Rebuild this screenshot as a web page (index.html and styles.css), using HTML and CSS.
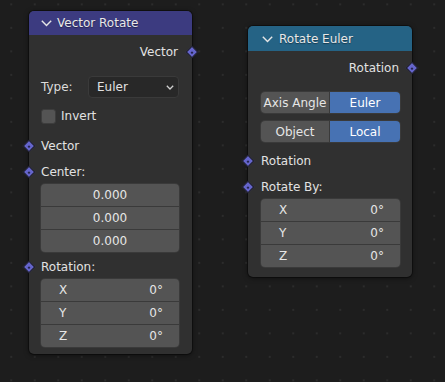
FILE: index.html
```html
<!DOCTYPE html>
<html>
<head>
<meta charset="utf-8">
<link rel="stylesheet" href="styles.css">
</head>
<body>
<div class="canvas">
  <div class="node n1">
    <div class="hdr vec">
      <svg class="chev" width="11" height="7" viewBox="0 0 11 7"><polyline points="0.8,0.8 5.5,5.6 10.2,0.8" fill="none" stroke="#e6e6e6" stroke-width="1.4"/></svg>
      <span>Vector Rotate</span>
    </div>
    <div class="row out r-first">Vector<i class="sock"></i></div>
    <div class="row gap13"><span class="lbl">Type:</span>
      <div class="dd"><span>Euler</span>
        <svg width="8" height="5" viewBox="0 0 8 5"><polyline points="0.8,0.8 4,4 7.2,0.8" fill="none" stroke="#d0d0d0" stroke-width="1.3"/></svg>
      </div>
    </div>
    <div class="row gap7"><span class="cb"></span><span>Invert</span></div>
    <div class="row in gap8"><i class="sock"></i>Vector</div>
    <div class="row in gap4"><i class="sock"></i>Center:</div>
    <div class="fields gap1">
      <div class="f c">0.000</div>
      <div class="f c">0.000</div>
      <div class="f c">0.000</div>
    </div>
    <div class="row in gap4"><i class="sock"></i>Rotation:</div>
    <div class="fields gap1">
      <div class="f"><span>X</span><span>0°</span></div>
      <div class="f"><span>Y</span><span>0°</span></div>
      <div class="f"><span>Z</span><span>0°</span></div>
    </div>
  </div>

  <div class="node n2">
    <div class="hdr conv">
      <svg class="chev" width="11" height="7" viewBox="0 0 11 7"><polyline points="0.8,0.8 5.5,5.6 10.2,0.8" fill="none" stroke="#e6e6e6" stroke-width="1.4"/></svg>
      <span>Rotate Euler</span>
    </div>
    <div class="row out r-first">Rotation<i class="sock"></i></div>
    <div class="seg gap13"><span>Axis Angle</span><span class="on">Euler</span></div>
    <div class="seg gap8"><span>Object</span><span class="on">Local</span></div>
    <div class="row in gap8"><i class="sock"></i>Rotation</div>
    <div class="row in gap4"><i class="sock"></i>Rotate By:</div>
    <div class="fields gap1">
      <div class="f"><span>X</span><span>0°</span></div>
      <div class="f"><span>Y</span><span>0°</span></div>
      <div class="f"><span>Z</span><span>0°</span></div>
    </div>
  </div>
</div>
</body>
</html>
```
FILE: styles.css
```css
html, body {
  margin: 0;
  padding: 0;
}
body {
  width: 445px;
  height: 382px;
  overflow: hidden;
  background-color: #1d1d1d;
  font-family: "DejaVu Sans", sans-serif;
  font-size: 12px;
  color: #e2e2e2;
}
.canvas {
  position: relative;
  width: 445px;
  height: 382px;
  background-color: #1d1d1d;
  background-image: radial-gradient(circle, #2c2c2c 1.2px, transparent 1.5px);
  background-size: 23.5px 23.5px;
  background-position: -0.5px -7.4px;
}
.node {
  position: absolute;
  background: #303030;
  border-radius: 5px;
  box-shadow: 0 0 0 1px rgba(0,0,0,0.35), 0 1px 5px rgba(0,0,0,0.55);
  display: flex;
  flex-direction: column;
  box-sizing: border-box;
}
.n1 {
  left: 29px;
  top: 11px;
  width: 163px;
  height: 343px;
  --pl: 12px;
  --pr: 13px;
  --po: 14px;
}
.n2 {
  left: 248px;
  top: 26px;
  width: 164px;
  height: 251px;
  --pl: 13px;
  --pr: 12px;
  --po: 13px;
}
.hdr {
  display: flex;
  align-items: center;
  border-radius: 5px 5px 0 0;
  padding-left: 12px;
  color: #e8e8e8;
  font-size: 12px;
  text-shadow: 0 1px 1px rgba(0,0,0,0.4);
}
.n1 .hdr { height: 24px; }
.n2 .hdr { height: 25px; padding-left: 14px; }
.hdr.vec { background: #3c3b80; }
.hdr.conv { background: #256385; }
.chev { margin-right: 5px; margin-top: 1px; }
.n2 .chev { margin-right: 6px; }

.row {
  position: relative;
  height: 22px;
  display: flex;
  align-items: center;
  padding: 0 var(--pr) 0 var(--pl);
}
.row.out {
  justify-content: flex-end;
  padding-right: var(--po);
}
.r-first { margin-top: 6px; }
.gap13 { margin-top: 13px; }
.gap8 { margin-top: 8px; }
.gap7 { margin-top: 7px; }
.gap4 { margin-top: 4px; }
.gap3 { margin-top: 3px; }
.gap1 { margin-top: 1px; }

.sock {
  position: absolute;
  top: 50%;
  width: 7px;
  height: 7px;
  background: #6565cc;
  border: 1px solid #161616;
  transform: translate(-50%, -50%) rotate(45deg);
  box-sizing: content-box;
}
.sock::after {
  content: "";
  position: absolute;
  left: 2.5px;
  top: 2.5px;
  width: 2px;
  height: 2px;
  background: #22224a;
}
.row.out .sock { left: 100%; }
.row.in .sock { left: 0; }

.lbl { color: #dcdcdc; }
.dd {
  margin-left: auto;
  width: 91px;
  height: 22px;
  box-sizing: border-box;
  background: #282828;
  border: 1px solid #3a3a3a;
  border-radius: 4px;
  display: flex;
  align-items: center;
  justify-content: space-between;
  padding: 0 4px 0 8px;
}
.cb {
  width: 15px;
  height: 15px;
  box-sizing: border-box;
  background: #545454;
  border: 1px solid #3d3d3d;
  border-radius: 3px;
  margin-right: 5px;
}

.fields {
  margin-left: var(--pl);
  margin-right: var(--pr);
  border-radius: 4px;
  overflow: hidden;
  background: #545454;
  box-shadow: 0 0 0 1px #3a3a3a;
  display: flex;
  flex-direction: column;
}
.f {
  height: 23px;
  box-sizing: border-box;
  display: flex;
  align-items: center;
  justify-content: space-between;
  padding: 0 16px 0 18px;
  color: #e6e6e6;
  border-top: 1px solid #3a3a3a;
}
.f:first-child { border-top: none; height: 22px; }
.f.c { justify-content: center; padding: 0; }

.seg {
  margin-left: var(--pl);
  margin-right: var(--pr);
  height: 21px;
  display: flex;
  border-radius: 4px;
  overflow: hidden;
  box-shadow: 0 0 0 1px #3a3a3a;
}
.seg span {
  flex: 1;
  display: flex;
  align-items: center;
  justify-content: center;
  background: #545454;
  color: #e6e6e6;
}
.seg span:first-child { flex: 0 0 68px; border-right: 1px solid #3a3a3a; }
.seg span.on { background: #4772b3; color: #ffffff; }
```
